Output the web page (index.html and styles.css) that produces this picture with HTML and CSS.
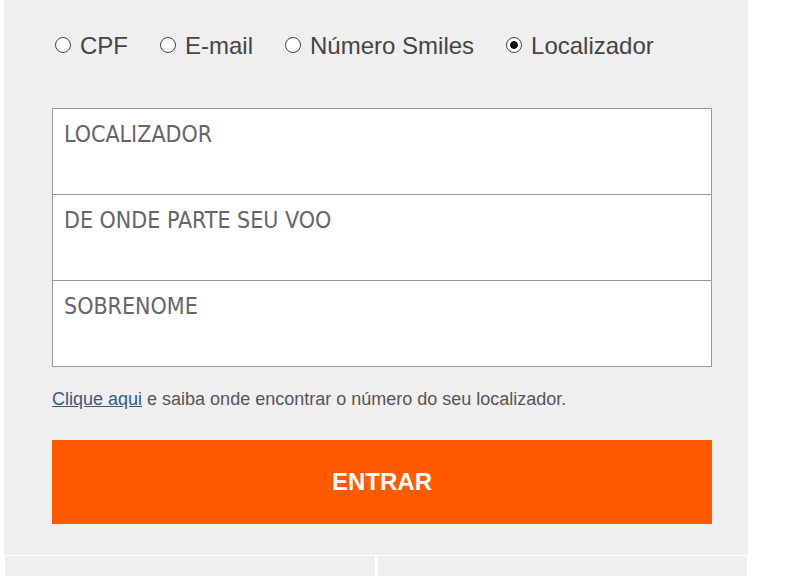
FILE: index.html
```html
<!DOCTYPE html>
<html lang="pt-BR">
<head>
    <meta charset="UTF-8">
    <meta name="viewport" content="width=device-width, initial-scale=1.0">
    <title>Login Smiles</title>
    <link rel="stylesheet" href="styles.css">
</head>
<body>
    <div id="login">
        <div class="tipos">
            <label class="tipo"><input type="radio" name="tipo"> CPF</label>
            <label class="tipo"><input type="radio" name="tipo"> E-mail</label>
            <label class="tipo"><input type="radio" name="tipo"> Número Smiles</label>
            <label class="tipo"><input type="radio" name="tipo" checked> Localizador</label>
        </div>

        <div class="campos">
            <div class="campo">LOCALIZADOR</div>
            <div class="campo">DE ONDE PARTE SEU VOO</div>
            <div class="campo">SOBRENOME</div>
        </div>

        <p class="ajuda"><a href="#">Clique aqui</a> e saiba onde encontrar o número do seu localizador.</p>

        <button id="entrar">ENTRAR</button>
    </div>

    <div id="rodape">
        <div class="caixa"></div>
        <div class="caixa"></div>
    </div>
</body>
</html>
```

FILE: styles.css
```css
body{
    margin: 0;
    background-color: white;
    font-family: "Liberation Sans", Arial, sans-serif;
}
#login{
    margin-left: 4px;
    width: 660px;
    padding: 33px 36px 31px 48px;
    background-color: #efefef;
}
.tipos{
    display: flex;
    gap: 29px;
    height: 25px;
}
.tipo{
    display: flex;
    align-items: center;
    gap: 9px;
    font-size: 24px;
    line-height: 25px;
    color: #444;
}
.tipo input{
    appearance: none;
    box-sizing: border-box;
    margin: -2px 0 0 3px;
    width: 16px;
    height: 16px;
    border: 1.5px solid #444;
    border-radius: 50%;
    background-color: white;
}
.tipo input:checked{
    background: radial-gradient(circle, #111 0 3.5px, white 4.2px);
}
.campos{
    margin-top: 50px;
    border: 1px solid #999;
    background-color: white;
}
.campo{
    height: 74px;
    padding: 11px 11px 0;
    font-family: "DejaVu Sans Condensed", sans-serif;
    font-size: 23px;
    line-height: 28px;
    color: #666;
    border-top: 1px solid #999;
}
.campo:first-child{
    border-top: none;
}
.ajuda{
    margin: 20px 0 0;
    font-size: 18px;
    line-height: 24px;
    color: #555;
}
.ajuda a{
    color: #3a5a7c;
}
#entrar{
    display: block;
    width: 100%;
    height: 84px;
    margin-top: 29px;
    border: none;
    background-color: #ff5a00;
    color: white;
    font-family: "Liberation Sans", Arial, sans-serif;
    font-size: 24px;
    font-weight: bold;
    cursor: pointer;
}
#rodape{
    display: flex;
    gap: 3px;
    margin: 1px 0 0 5px;
    width: 742px;
}
.caixa{
    flex: 1;
    height: 40px;
    background-color: #efefef;
}
```
